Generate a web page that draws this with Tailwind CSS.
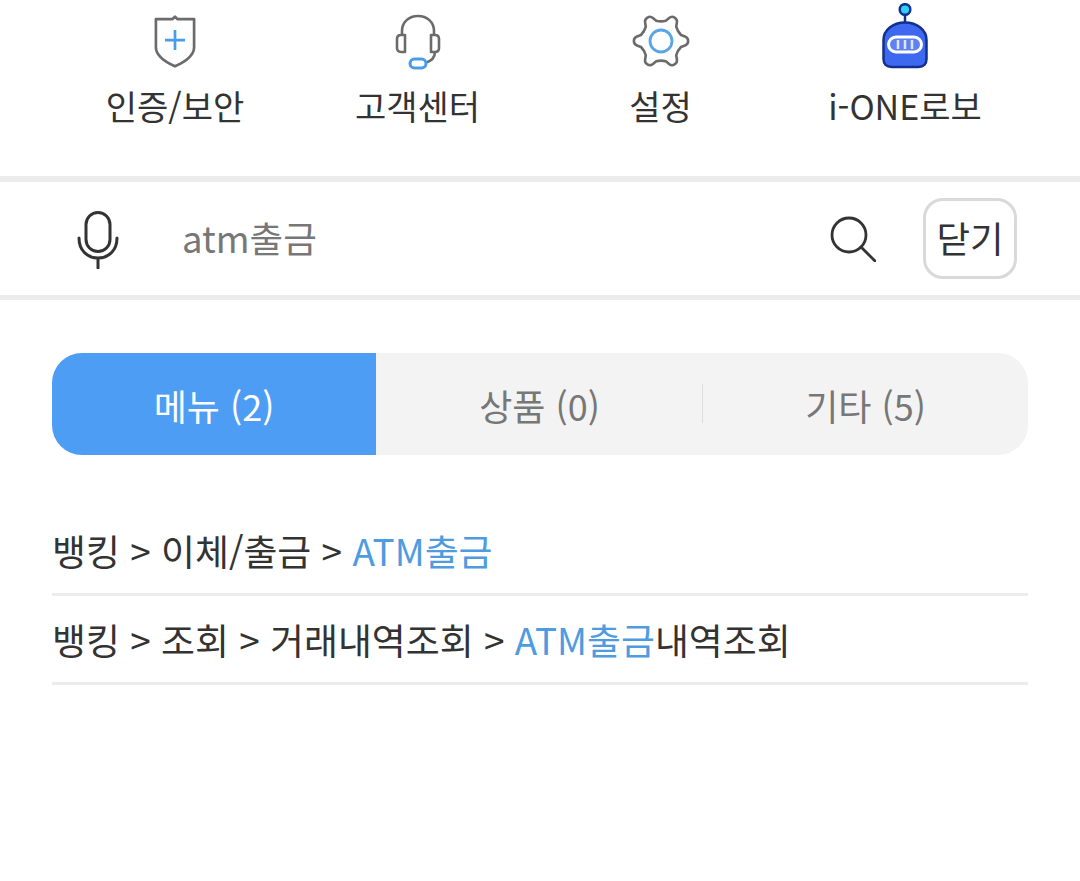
<!DOCTYPE html>
<html lang="ko">
  <head>
    <meta charset="UTF-8" />
    <title>검색</title>
    <script src="https://cdn.jsdelivr.net/npm/@tailwindcss/browser@4"></script>
  </head>
  <body class="bg-white h-[881px] overflow-hidden font-['Noto_Sans_CJK_KR','Noto_Sans',sans-serif] text-[#333333]">
    <!-- top menu -->
    <nav class="h-[176px] pl-[54px] grid grid-cols-[242px_243px_243px_246px] text-[34px] leading-[44px]">
      <a class="flex flex-col items-center">
        <div class="h-[84px] pt-[14px]">
          <svg class="w-[42px] h-[55px]" viewBox="0 0 44 56" fill="none">
            <path d="M2 4.500H19.500L22 2L24.500 4.500H42V34C42 43 32 49.500 22 54C12 49.500 2 43 2 34Z" stroke="#6b6b6b" stroke-width="2.800" stroke-linejoin="round" />
            <path d="M22 16V37M11.500 26.500H32.500" stroke="#4a9be8" stroke-width="2.800" />
          </svg>
        </div>
        <span>인증/보안</span>
      </a>
      <a class="flex flex-col items-center">
        <div class="h-[84px] pt-[14px]">
          <svg class="w-[46px] h-[56px]" viewBox="0 0 46 56" fill="none">
            <path d="M7 20V17C7 8 14 2 23 2C32 2 39 8 39 17V20" stroke="#6b6b6b" stroke-width="2.600" />
            <path d="M10 21V38H6C3.500 38 2 36.500 2 34V25C2 22.500 3.500 21 6 21ZM36 21V38H40C42.500 38 44 36.500 44 34V25C44 22.500 42.500 21 40 21Z" stroke="#6b6b6b" stroke-width="2.600" stroke-linejoin="round" />
            <path d="M40 38C40 44 37 47 30 49" stroke="#6b6b6b" stroke-width="2.600" />
            <rect x="15" y="45" width="16" height="9" rx="4.500" stroke="#4a9be8" stroke-width="3" />
          </svg>
        </div>
        <span>고객센터</span>
      </a>
      <a class="flex flex-col items-center">
        <div class="h-[84px] pt-[15px]">
          <svg class="w-[56px] h-[52px] overflow-visible" viewBox="0 0 56 52" fill="none">
            <path d="M36.100 3A4.800 4.800 0 0 1 43.900 7.500L43.200 11.700Q44.500 16.500 48 20L52 21.500A4.800 4.800 0 0 1 52 30.500L48 32Q44.500 35.500 43.200 40.300L43.900 44.500A4.800 4.800 0 0 1 36.100 49L32.800 46.300Q28 45 23.200 46.300L19.900 49A4.800 4.800 0 0 1 12.100 44.500L12.800 40.300Q11.500 35.500 8 32L4 30.500A4.800 4.800 0 0 1 4 21.500L8 20Q11.500 16.500 12.800 11.700L12.100 7.500A4.800 4.800 0 0 1 19.900 3L23.200 5.700Q28 7 32.800 5.700Z" stroke="#6b6b6b" stroke-width="2.600" stroke-linejoin="round" />
            <circle cx="28" cy="26" r="11" stroke="#5aa5e6" stroke-width="2.800" />
          </svg>
        </div>
        <span>설정</span>
      </a>
      <a class="flex flex-col items-center">
        <div class="h-[84px] pt-[3px]">
          <svg class="w-[46px] h-[67px]" viewBox="0 0 46 67" fill="none">
            <path d="M23 11V20" stroke="#12308f" stroke-width="2.500" />
            <circle cx="23" cy="6.500" r="5.300" fill="#2fd0f5" stroke="#12308f" stroke-width="2.500" />
            <path d="M1.500 37C1.500 27 11 19.500 23 19.500C35 19.500 44.500 27 44.500 37V56C44.500 61 41.500 64 36.500 64H9.500C4.500 64 1.500 61 1.500 56Z" fill="#3e68f0" stroke="#12308f" stroke-width="2.500" />
            <rect x="6.500" y="34" width="33" height="15" rx="7.500" fill="#5f82f0" stroke="#fff" stroke-width="3" />
            <path d="M16 37V46M23 37V46M30 37V46" stroke="#dfe6fd" stroke-width="2.500" />
          </svg>
        </div>
        <span>i-ONE로보</span>
      </a>
    </nav>

    <!-- search -->
    <section class="h-[124px] border-t-[6px] border-b-[5px] border-[#ececec] flex items-center pl-[77px] pr-[63px]">
      <svg class="mt-[3px] w-[42px] h-[58px]" viewBox="0 0 42 58" fill="none" stroke="#333" stroke-width="3" stroke-linecap="round">
        <rect x="9" y="1.500" width="24" height="39" rx="12" />
        <path d="M2 27C2 39 10 47 21 47C32 47 40 39 40 27M21 47V57" />
      </svg>
      <span class="ml-[63px] text-[36.500px] leading-none text-[#777777]">atm출금</span>
      <svg class="ml-auto w-[46px] h-[46px]" viewBox="0 0 46 46" fill="none" stroke="#333" stroke-width="2.800" stroke-linecap="round">
        <circle cx="19" cy="19" r="17" />
        <path d="M31 31L45 45" />
      </svg>
      <button class="ml-[47px] w-[94px] h-[81px] rounded-[20px] border-[3px] border-[#d9d9d9] text-[36.500px] leading-none text-[#333333]">닫기</button>
    </section>

    <!-- tabs -->
    <div class="mx-[52px] mt-[53px] h-[102px] rounded-[30px] overflow-hidden bg-[#f3f3f3] grid grid-cols-[324px_327px_325px] text-[36px] text-[#777777]">
      <div class="bg-[#4d9df5] text-white flex items-center justify-center pt-[2px]">메뉴 (2)</div>
      <div class="flex items-center justify-center relative pt-[2px]">
        상품 (0)
        <span class="absolute right-0 top-[31px] h-[39px] w-px bg-[#dddddd]"></span>
      </div>
      <div class="flex items-center justify-center pt-[2px]">기타 (5)</div>
    </div>

    <!-- results -->
    <ul class="mx-[52px] mt-[52px] text-[36.900px]">
      <li class="h-[89px] border-b-[3px] border-[#ececec] flex items-center pt-[1px]">
        <span>뱅킹 &gt; 이체/출금 &gt; <span class="text-[#4f9be0]">ATM출금</span></span>
      </li>
      <li class="h-[89px] border-b-[3px] border-[#ececec] flex items-center pt-[1px]">
        <span>뱅킹 &gt; 조회 &gt; 거래내역조회 &gt; <span class="text-[#4f9be0]">ATM출금</span>내역조회</span>
      </li>
    </ul>
  </body>
</html>
